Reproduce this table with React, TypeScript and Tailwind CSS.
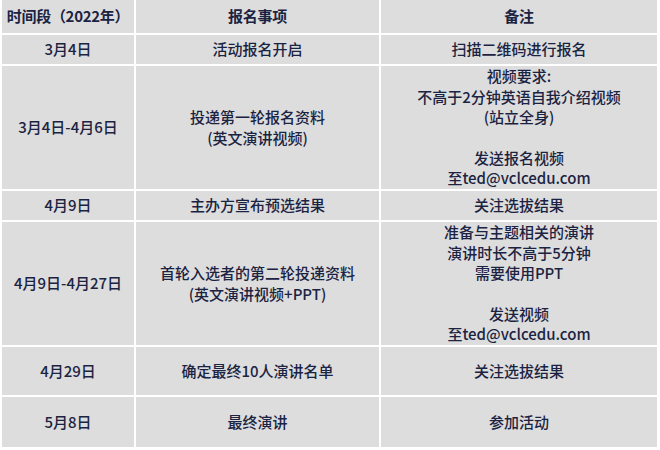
const ROWS: { h: string; cells: string[][] }[] = [
  { h: 'h-[29px]', cells: [['3月4日'], ['活动报名开启'], ['扫描二维码进行报名']] },
  {
    h: 'h-[123px]',
    cells: [
      ['3月4日-4月6日'],
      ['投递第一轮报名资料', '(英文演讲视频)'],
      ['视频要求:', '不高于2分钟英语自我介绍视频', '(站立全身)', '', '发送报名视频', '至ted@vclcedu.com'],
    ],
  },
  { h: 'h-[29px]', cells: [['4月9日'], ['主办方宣布预选结果'], ['关注选拔结果']] },
  {
    h: 'h-[123px]',
    cells: [
      ['4月9日-4月27日'],
      ['首轮入选者的第二轮投递资料', '(英文演讲视频+PPT)'],
      ['准备与主题相关的演讲', '演讲时长不高于5分钟', '需要使用PPT', '', '发送视频', '至ted@vclcedu.com'],
    ],
  },
  { h: 'h-[48px]', cells: [['4月29日'], ['确定最终10人演讲名单'], ['关注选拔结果']] },
  { h: 'h-[50px]', cells: [['5月8日'], ['最终演讲'], ['参加活动']] },
];

const HEADERS = ['时间段（2022年）', '报名事项', '备注'];

const Cell = ({ lines, className }: { lines: string[]; className: string }) => (
  <div className={`bg-[#dddddd] flex flex-col items-center justify-center text-center ${className}`}>
    {lines.map((l, i) => (
      <div key={i} className="h-[20.6px] whitespace-nowrap">
        {l}
      </div>
    ))}
  </div>
);

export default function App() {
  return (
    <div
      className="w-[660px] h-[450px] bg-white pl-[1px] text-[#1b2342] text-[15px] leading-[20.6px] font-medium"
      style={{ fontFamily: '"Noto Sans CJK SC", "Noto Sans", sans-serif' }}
    >
      <div className="grid grid-cols-[132px_243px_276px] gap-[2px] w-[655px] pl-[1px]">
        {HEADERS.map((t) => (
          <div key={t} className="h-[33px] bg-[#dddddd] flex items-center justify-center font-bold whitespace-nowrap tracking-[-0.3px]">
            {t}
          </div>
        ))}
        {ROWS.map((r, ri) =>
          r.cells.map((c, ci) => <Cell key={`${ri}-${ci}`} lines={c} className={r.h} />)
        )}
      </div>
    </div>
  );
}
